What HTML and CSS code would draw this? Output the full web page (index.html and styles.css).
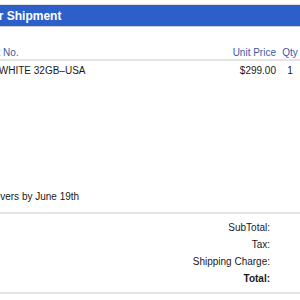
FILE: index.html
```html
<!DOCTYPE html>
<html>
<head>
<meta charset="utf-8">
<link rel="stylesheet" href="styles.css">
</head>
<body>
<div class="wrap">
  <div class="bar">Your Shipment</div>
  <div class="items">
    <div class="row head">
      <div class="desc">Part No.</div>
      <div class="price">Unit Price</div>
      <div class="qty">Qty</div>
    </div>
    <div class="row item">
      <div class="desc">iPod WHITE 32GB–USA</div>
      <div class="price">$299.00</div>
      <div class="qty">1</div>
    </div>
  </div>
  <div class="delivery">Delivers by June 19th</div>
  <div class="totals">
    <div class="label">SubTotal:</div><div class="value"></div>
    <div class="label">Tax:</div><div class="value"></div>
    <div class="label">Shipping Charge:</div><div class="value"></div>
    <div class="label strong">Total:</div><div class="value"></div>
  </div>
</div>
</body>
</html>
```

FILE: styles.css
```css
html, body {
  margin: 0;
  padding: 0;
  background: #fff;
  overflow: hidden;
}
body {
  font-family: "Liberation Sans", Arial, sans-serif;
  font-size: 10px;
  color: #1a1a1a;
}
.wrap {
  margin-left: -80px;
  width: 380px;
  padding-top: 4px;
}
.bar {
  border-top: 1px solid #e2e2e2;
  border-bottom: 1px solid #c9ccd2;
  height: 21px;
  line-height: 22px;
  background: #2d5fcb;
  color: #fff;
  font-weight: bold;
  font-size: 12px;
  padding-left: 57px;
}
.items {
  margin-top: 19px;
}
.row {
  display: grid;
  grid-template-columns: 1fr auto 20px;
  column-gap: 4px;
  line-height: 13px;
  padding-left: 62px;
}
.head {
  color: #3a5aa6;
  border-bottom: 2px solid #e4e4e4;
}
.item {
  padding-top: 3px;
  padding-left: 56px;
}
.price {
  text-align: right;
}
.qty {
  text-align: center;
}
.delivery {
  margin-top: 113px;
  padding-left: 63px;
  line-height: 13px;
  padding-bottom: 9px;
  border-bottom: 2px solid #e4e4e4;
}
.totals {
  display: grid;
  grid-template-columns: 1fr 30px;
  line-height: 17px;
  padding: 5px 0 5px;
  border-bottom: 2px solid #e4e4e4;
}
.label {
  text-align: right;
}
.strong {
  font-weight: bold;
}
```
